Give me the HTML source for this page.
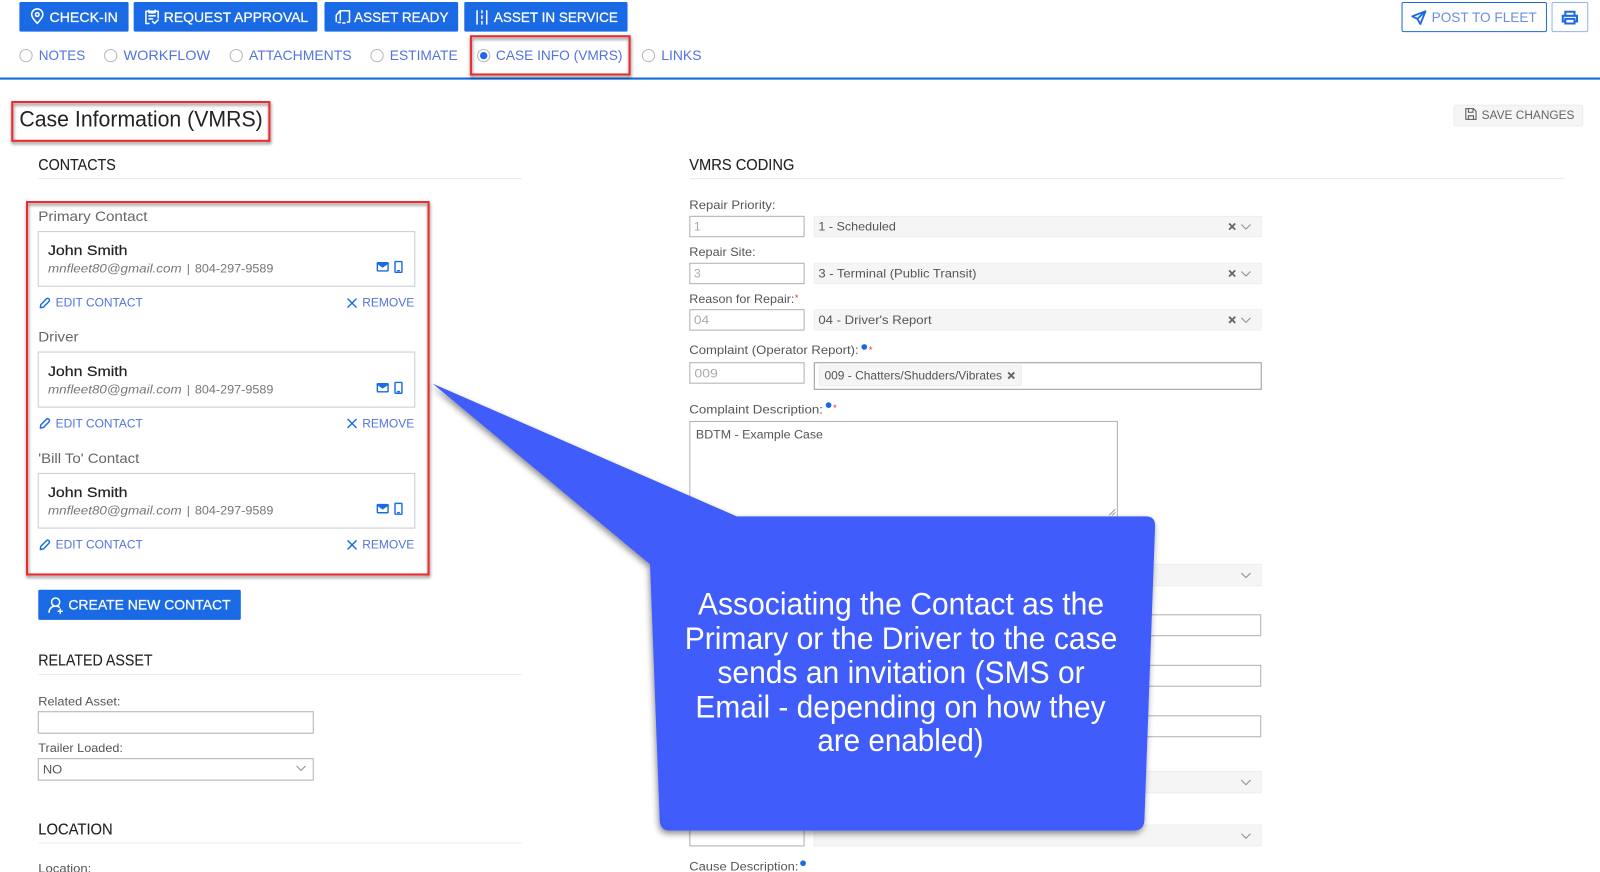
<!DOCTYPE html>
<html lang="en">
<head>
<meta charset="utf-8">
<title>Case Information (VMRS)</title>
<style>
html,body{margin:0;padding:0;background:#fff;width:1600px;height:872px;overflow:hidden}
svg{display:block;filter:blur(.3px)}
text{font-family:"Liberation Sans",Arial,sans-serif}
.btn{fill:#fff;font-size:14px;stroke:#fff;stroke-width:.25}
.tab{fill:#5273de;font-size:14px}
.h{fill:#222;font-size:15px;stroke:#222;stroke-width:.1}
.lab{fill:#555;font-size:12px}
.lab2{fill:#666;font-size:14px}
.name{fill:#222;font-size:14px;stroke:#222;stroke-width:.2}
.em{fill:#777;font-size:12px;font-style:italic}
.ph{fill:#777;font-size:12px}
.act{fill:#5273de;font-size:12px}
.val{fill:#555;font-size:12px}
.dim{fill:#aaa;font-size:12px}
.call{fill:#fff;font-size:31px}
.inp{fill:#fff;stroke:#b0b0b0;stroke-width:1}
.sel{fill:#f5f5f5;stroke:#eee;stroke-width:1}
.ln{stroke:#e9e9e9;stroke-width:1}
.ico{fill:none;stroke:#1a6ae6;stroke-width:1.4;stroke-linecap:round;stroke-linejoin:round}
.w{fill:none;stroke:#fff;stroke-width:1.5;stroke-linecap:round;stroke-linejoin:round}
.chev{fill:none;stroke:#8a8a8a;stroke-width:1}
.x{fill:none;stroke:#666;stroke-width:1.8}
.rb{fill:#fff;stroke:#b5b5b5;stroke-width:1}
.red{fill:none;stroke:#ea2a2e;stroke-width:2;filter:url(#rs)}
</style>
</head>
<body>
<svg xmlns="http://www.w3.org/2000/svg" width="1600" height="872" viewBox="0 0 1568 854.56">
<defs>
<filter id="rs" x="-10%" y="-20%" width="120%" height="140%"><feDropShadow dx="0.5" dy="2" stdDeviation="1.6" flood-color="#000" flood-opacity=".55"/></filter>
<filter id="cs" x="-10%" y="-10%" width="120%" height="120%"><feDropShadow dx="-1" dy="3" stdDeviation="3" flood-color="#000" flood-opacity=".45"/></filter>
<g id="env"><rect x="-5.2" y="-4" width="10.5" height="8" rx=".5" class="ico"/><path d="M-5.2 -3.2 L0 0.4 L5.3 -3.2 Z" fill="#1a6ae6" stroke="#1a6ae6" stroke-width=".8"/></g>
<g id="mob"><rect x="-3.4" y="-5.2" width="6.8" height="10.6" rx=".6" class="ico" stroke-width="1.2"/><path d="M-.8 3.8H.8" class="ico"/></g>
<g id="pen"><path d="M-4.5 4.5 L-4 1.4 L1.6 -4.2 Q2.8 -5.2 4 -4 Q5 -2.8 4 -1.6 L-1.4 4 Z" class="ico"/></g>
<g id="xx"><path d="M-4 -4 L4 4 M4 -4 L-4 4" class="ico"/></g>
<path id="cv" d="M-4.5 -2 L0 2.5 L4.5 -2" class="chev"/>
<path id="xs" d="M-3 -3 L3 3 M3 -3 L-3 3" class="x"/>
</defs>

<rect width="1568" height="855" fill="#fff"/>

<!-- top buttons -->
<rect x="19" y="2" width="107" height="29" rx="1.5" fill="#1a6ae6"/>
<rect x="131" y="2" width="180" height="29" rx="1.5" fill="#1a6ae6"/>
<rect x="318" y="2" width="131" height="29" rx="1.5" fill="#1a6ae6"/>
<rect x="455" y="2" width="160" height="29" rx="1.5" fill="#1a6ae6"/>
<path d="M36.5 23 C33 19 31 16.6 31 14.2 A5.5 5.5 0 0 1 42 14.2 C42 16.6 40 19 36.5 23Z" class="w"/><circle cx="36.5" cy="14.2" r="1.8" class="w"/>
<path d="M146 23H143V11H155V17.5M146 10V12.5H152V10M146 15.5H152M146 18.5H149.5M149.5 21L151.5 23L155 19.5" class="w"/>
<path d="M329.5 21V15L333 10.8M333.5 22H331.5M333.5 10.5H342.5V21.5H340.5M336 22.5H338M333.5 10.5V19.5" class="w"/>
<path d="M467.5 10.5V23.5M477 10.5V23.5M472.3 10.5V12.5M472.3 15.5V18M472.3 21V23.5" class="w"/>
<text class="btn" x="48.5" y="21.5" textLength="67" lengthAdjust="spacingAndGlyphs">CHECK-IN</text>
<text class="btn" x="160.5" y="21.5" textLength="141.5" lengthAdjust="spacingAndGlyphs">REQUEST APPROVAL</text>
<text class="btn" x="347" y="21.5" textLength="92.5" lengthAdjust="spacingAndGlyphs">ASSET READY</text>
<text class="btn" x="484" y="21.5" textLength="121.5" lengthAdjust="spacingAndGlyphs">ASSET IN SERVICE</text>

<rect x="1374" y="2.5" width="141.5" height="28.5" rx="1.5" fill="#fff" stroke="#1a6ae6"/>
<rect x="1521" y="2.5" width="35" height="28.5" rx="1.5" fill="#fff" stroke="#8fb4ee"/>
<path d="M1397 11 L1384 16 L1389 18.5 L1392 23.5 Z M1389 18.5 L1397 11" fill="none" stroke="#1a6ae6" stroke-width="1.8" stroke-linejoin="round"/>
<text x="1403" y="21.5" font-size="14" fill="#6f8be4" textLength="103" lengthAdjust="spacingAndGlyphs">POST TO FLEET</text>
<path d="M1534 15V11.5H1543V15M1534 21H1531.5V15.5H1545.5V21H1543M1534 18.5H1543V23H1534Z" fill="none" stroke="#1a6ae6" stroke-width="2"/>

<!-- tabs -->
<circle class="rb" cx="25.5" cy="54.5" r="6"/>
<circle class="rb" cx="108.5" cy="54.5" r="6"/>
<circle class="rb" cx="231.5" cy="54.5" r="6"/>
<circle class="rb" cx="369.5" cy="54.5" r="6"/>
<circle class="rb" cx="474" cy="54.5" r="6"/><circle cx="474" cy="54.5" r="3.6" fill="#1a6ae6"/>
<circle class="rb" cx="635.5" cy="54.5" r="6"/>
<text class="tab" x="38" y="59" textLength="45.5" lengthAdjust="spacingAndGlyphs">NOTES</text>
<text class="tab" x="121" y="59" textLength="85" lengthAdjust="spacingAndGlyphs">WORKFLOW</text>
<text class="tab" x="244" y="59" textLength="100.5" lengthAdjust="spacingAndGlyphs">ATTACHMENTS</text>
<text class="tab" x="382" y="59" textLength="66.5" lengthAdjust="spacingAndGlyphs">ESTIMATE</text>
<text class="tab" x="486" y="59" textLength="124" lengthAdjust="spacingAndGlyphs">CASE INFO (VMRS)</text>
<text class="tab" x="648" y="59" textLength="39.5" lengthAdjust="spacingAndGlyphs">LINKS</text>
<rect x="0" y="76" width="1568" height="2" fill="#0b66dc"/>

<!-- title -->
<text x="19" y="124" font-size="22" fill="#222" textLength="238.5" lengthAdjust="spacingAndGlyphs">Case Information (VMRS)</text>
<rect x="1425" y="103" width="126" height="20.5" rx="2" fill="#f5f5f5" stroke="#ececec"/>
<path d="M1436.5 106.5H1444L1446.5 109V117H1436.5ZM1439 106.5V110H1443.5V106.5M1439 117V113.5H1444V117" fill="none" stroke="#555" stroke-width="1"/>
<text x="1452" y="116.5" font-size="12" fill="#666" textLength="91" lengthAdjust="spacingAndGlyphs">SAVE CHANGES</text>

<!-- headings -->
<text class="h" x="37.5" y="166.5" textLength="76" lengthAdjust="spacingAndGlyphs">CONTACTS</text>
<line class="ln" x1="38" y1="175" x2="511" y2="175"/>
<text class="h" x="675.5" y="166.5" textLength="103" lengthAdjust="spacingAndGlyphs">VMRS CODING</text>
<line class="ln" x1="676" y1="175" x2="1532" y2="175"/>

<!-- contact 1 -->
<text class="lab2" x="37.5" y="216.5" textLength="107" lengthAdjust="spacingAndGlyphs">Primary Contact</text>
<rect x="37.5" y="227" width="369" height="53.5" fill="#fff" stroke="#c9ccd6"/>
<text class="name" x="47" y="250" textLength="78" lengthAdjust="spacingAndGlyphs">John Smith</text>
<text class="em" x="47" y="267" textLength="131" lengthAdjust="spacingAndGlyphs">mnfleet80@gmail.com</text>
<text class="ph" x="183" y="267">|</text>
<text class="ph" x="191" y="267" textLength="77" lengthAdjust="spacingAndGlyphs">804-297-9589</text>
<use href="#env" x="375" y="261.5"/><use href="#mob" x="390.5" y="261.5"/>
<use href="#pen" x="44" y="297"/>
<text class="act" x="54.5" y="300.5" textLength="85.5" lengthAdjust="spacingAndGlyphs">EDIT CONTACT</text>
<use href="#xx" x="345" y="297"/>
<text class="act" x="355" y="300.5" textLength="51" lengthAdjust="spacingAndGlyphs">REMOVE</text>

<!-- contact 2 -->
<text class="lab2" x="37.5" y="334.5" textLength="39.5" lengthAdjust="spacingAndGlyphs">Driver</text>
<rect x="37.5" y="345" width="369" height="54" fill="#fff" stroke="#c9ccd6"/>
<text class="name" x="47" y="368.5" textLength="78" lengthAdjust="spacingAndGlyphs">John Smith</text>
<text class="em" x="47" y="385.5" textLength="131" lengthAdjust="spacingAndGlyphs">mnfleet80@gmail.com</text>
<text class="ph" x="183" y="385.5">|</text>
<text class="ph" x="191" y="385.5" textLength="77" lengthAdjust="spacingAndGlyphs">804-297-9589</text>
<use href="#env" x="375" y="380"/><use href="#mob" x="390.5" y="380"/>
<use href="#pen" x="44" y="415"/>
<text class="act" x="54.5" y="419" textLength="85.5" lengthAdjust="spacingAndGlyphs">EDIT CONTACT</text>
<use href="#xx" x="345" y="415"/>
<text class="act" x="355" y="419" textLength="51" lengthAdjust="spacingAndGlyphs">REMOVE</text>

<!-- contact 3 -->
<text class="lab2" x="37.5" y="453.5" textLength="99" lengthAdjust="spacingAndGlyphs">'Bill To' Contact</text>
<rect x="37.5" y="464" width="369" height="53.5" fill="#fff" stroke="#c9ccd6"/>
<text class="name" x="47" y="487" textLength="78" lengthAdjust="spacingAndGlyphs">John Smith</text>
<text class="em" x="47" y="504" textLength="131" lengthAdjust="spacingAndGlyphs">mnfleet80@gmail.com</text>
<text class="ph" x="183" y="504">|</text>
<text class="ph" x="191" y="504" textLength="77" lengthAdjust="spacingAndGlyphs">804-297-9589</text>
<use href="#env" x="375" y="498.5"/><use href="#mob" x="390.5" y="498.5"/>
<use href="#pen" x="44" y="534"/>
<text class="act" x="54.5" y="537.5" textLength="85.5" lengthAdjust="spacingAndGlyphs">EDIT CONTACT</text>
<use href="#xx" x="345" y="534"/>
<text class="act" x="355" y="537.5" textLength="51" lengthAdjust="spacingAndGlyphs">REMOVE</text>

<!-- create contact -->
<rect x="37.5" y="578" width="198.5" height="29.5" rx="1.5" fill="#1a6ae6"/>
<circle cx="54.5" cy="590" r="4" class="w"/>
<path d="M48 600 C48.5 595.5 51 594 54.5 594 C56 594 57 594.3 58 595M59 597V601M57 599H61" class="w"/>
<text class="btn" x="67" y="597.5" textLength="159" lengthAdjust="spacingAndGlyphs">CREATE NEW CONTACT</text>

<!-- related asset -->
<text class="h" x="37.5" y="652" textLength="112" lengthAdjust="spacingAndGlyphs">RELATED ASSET</text>
<line class="ln" x1="38" y1="661" x2="511" y2="661"/>
<text class="lab" x="37.5" y="691.5" textLength="80.5" lengthAdjust="spacingAndGlyphs">Related Asset:</text>
<rect class="inp" x="37.5" y="697.5" width="269.5" height="21"/>
<text class="lab" x="37.5" y="737" textLength="83" lengthAdjust="spacingAndGlyphs">Trailer Loaded:</text>
<rect class="inp" x="37.5" y="743.5" width="269.5" height="21"/>
<text class="val" x="42" y="758" textLength="19" lengthAdjust="spacingAndGlyphs">NO</text>
<use href="#cv" x="295" y="752.5"/>

<!-- location -->
<text class="h" x="37.5" y="818" textLength="73" lengthAdjust="spacingAndGlyphs">LOCATION</text>
<line class="ln" x1="38" y1="826" x2="511" y2="826" stroke-width="1.5"/>
<text class="lab" x="37.5" y="855" textLength="52" lengthAdjust="spacingAndGlyphs">Location:</text>

<!-- VMRS coding -->
<text class="lab" x="675.5" y="205" textLength="84.5" lengthAdjust="spacingAndGlyphs">Repair Priority:</text>
<rect class="inp" x="676" y="212" width="112" height="20"/>
<text class="dim" x="680" y="226">1</text>
<rect class="sel" x="798" y="212" width="438" height="20"/>
<text class="val" x="802" y="226" textLength="76" lengthAdjust="spacingAndGlyphs">1 - Scheduled</text>
<use href="#xs" x="1207.5" y="222"/><use href="#cv" x="1221" y="222"/>

<text class="lab" x="675.5" y="251" textLength="65" lengthAdjust="spacingAndGlyphs">Repair Site:</text>
<rect class="inp" x="676" y="258" width="112" height="20"/>
<text class="dim" x="680" y="272">3</text>
<rect class="sel" x="798" y="258" width="438" height="20"/>
<text class="val" x="802" y="272" textLength="155" lengthAdjust="spacingAndGlyphs">3 - Terminal (Public Transit)</text>
<use href="#xs" x="1207.5" y="268"/><use href="#cv" x="1221" y="268"/>

<text class="lab" x="675.5" y="297" textLength="103" lengthAdjust="spacingAndGlyphs">Reason for Repair:</text>
<text x="779" y="295" font-size="9" fill="#e22">*</text>
<rect class="inp" x="676" y="303.5" width="112" height="20"/>
<text class="dim" x="680" y="317.5" textLength="15" lengthAdjust="spacingAndGlyphs">04</text>
<rect class="sel" x="798" y="303.5" width="438" height="20"/>
<text class="val" x="802" y="317.5" textLength="111" lengthAdjust="spacingAndGlyphs">04 - Driver's Report</text>
<use href="#xs" x="1207.5" y="313.5"/><use href="#cv" x="1221" y="313.5"/>

<text class="lab" x="675.5" y="347" textLength="166" lengthAdjust="spacingAndGlyphs">Complaint (Operator Report):</text>
<circle cx="847" cy="340" r="2.8" fill="#1a6ae6"/>
<text x="851.5" y="346" font-size="9" fill="#e22">*</text>
<rect class="inp" x="676" y="355.5" width="112" height="20"/>
<text class="dim" x="680.5" y="370" textLength="23" lengthAdjust="spacingAndGlyphs">009</text>
<rect class="inp" x="798" y="355.5" width="438" height="26" style="stroke:#999"/>
<rect x="803" y="358" width="198" height="20" rx="1" fill="#f5f5f5" stroke="#eee"/>
<text x="808" y="372" font-size="11.5" fill="#555" textLength="174" lengthAdjust="spacingAndGlyphs">009 - Chatters/Shudders/Vibrates</text>
<use href="#xs" x="991" y="368"/>

<text class="lab" x="675.5" y="405" textLength="131" lengthAdjust="spacingAndGlyphs">Complaint Description:</text>
<circle cx="812" cy="397" r="2.8" fill="#1a6ae6"/>
<text x="816.5" y="403" font-size="9" fill="#e22">*</text>
<rect class="inp" x="676" y="413" width="419" height="94"/>
<text class="val" x="682" y="429.5" textLength="124.5" lengthAdjust="spacingAndGlyphs">BDTM - Example Case</text>
<path d="M1087 505 L1093 499 M1090 505 L1093 502" stroke="#888" stroke-width=".8"/>

<rect class="sel" x="798" y="553" width="438" height="21"/>
<use href="#cv" x="1221" y="563.5"/>
<rect class="inp" x="900" y="602.5" width="335.5" height="20.5"/>
<rect class="inp" x="900" y="652" width="335.5" height="20.5"/>
<rect class="inp" x="900" y="701.5" width="335.5" height="20.5"/>
<rect class="sel" x="798" y="756" width="438" height="21"/>
<use href="#cv" x="1221" y="766.5"/>
<rect class="inp" x="676" y="800" width="112" height="29"/>
<rect class="sel" x="798" y="808.5" width="438" height="20.5"/>
<use href="#cv" x="1221" y="819"/>
<text class="lab" x="675.5" y="853" textLength="107" lengthAdjust="spacingAndGlyphs">Cause Description:</text>
<circle cx="787" cy="846" r="2.8" fill="#1a6ae6"/>

<!-- red highlight boxes -->
<rect class="red" x="461.5" y="35.5" width="155.5" height="37.5"/>
<rect class="red" x="12" y="100" width="252" height="38"/>
<rect class="red" x="26.5" y="198" width="393.5" height="365"/>

<!-- callout -->
<path d="M424 376 L722 506 H1123 Q1132 506 1132 515 L1121.5 804 Q1121 814 1111 814 H656 Q647 814 646.5 804 L637 553 Z" fill="#405cfb" filter="url(#cs)"/>
<text class="call" x="684" y="602" textLength="398" lengthAdjust="spacingAndGlyphs">Associating the Contact as the</text>
<text class="call" x="671" y="636" textLength="424" lengthAdjust="spacingAndGlyphs">Primary or the Driver to the case</text>
<text class="call" x="703" y="669.5" textLength="360" lengthAdjust="spacingAndGlyphs">sends an invitation (SMS or</text>
<text class="call" x="681.5" y="703" textLength="402" lengthAdjust="spacingAndGlyphs">Email - depending on how they</text>
<text class="call" x="801" y="736" textLength="163" lengthAdjust="spacingAndGlyphs">are enabled)</text>
</svg>
</body>
</html>
